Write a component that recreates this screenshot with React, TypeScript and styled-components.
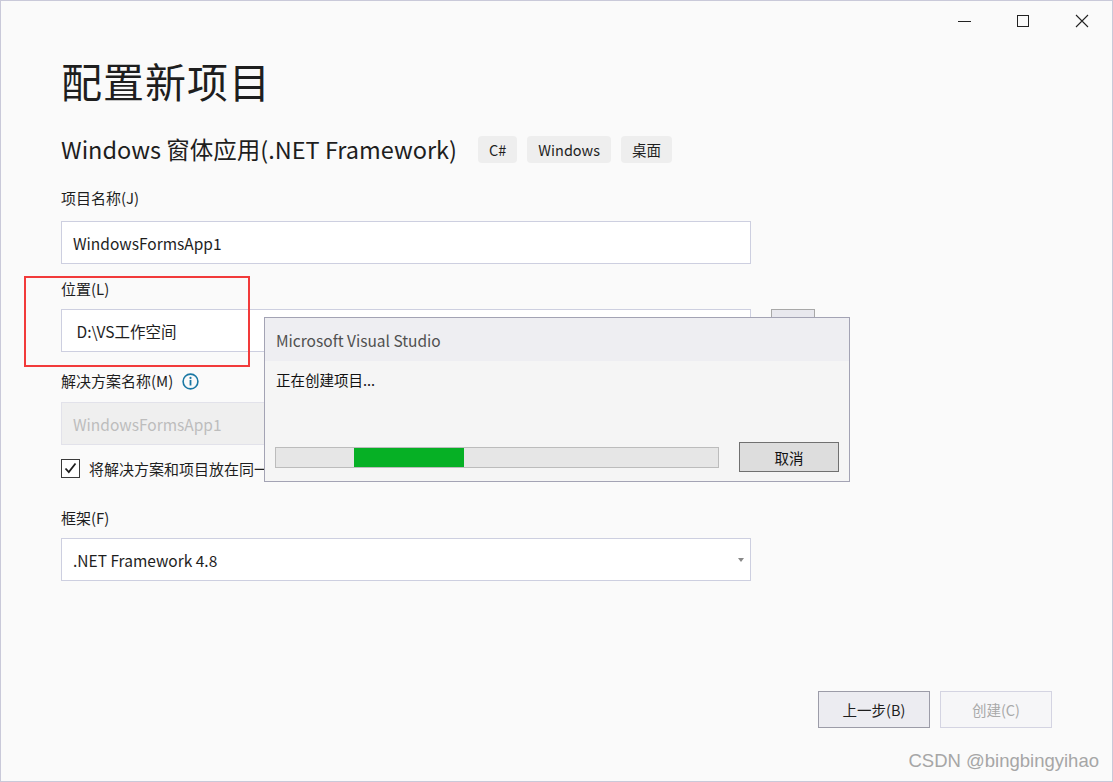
import styled, {createGlobalStyle} from 'styled-components';

const GlobalStyle = createGlobalStyle`
  html, body {
    margin: 0;
    padding: 0;
    background: #fafafa;
  }
  * {
    box-sizing: border-box;
  }
`;

const FONT = `"Noto Sans CJK SC", "Noto Sans", sans-serif`;

const Window = styled.div`
  position: relative;
  width: 1113px;
  height: 782px;
  border: 1px solid #c9c9d9;
  background: #fafafa;
  font-family: ${FONT};
  color: #1e1e1e;
  display: flex;
  flex-direction: column;
  overflow: hidden;
`;

const TitleBar = styled.div`
  height: 42px;
  display: flex;
  justify-content: flex-end;
  align-items: flex-start;
  padding-right: 1px;
`;

const CaptionButton = styled.div`
  width: 59px;
  height: 40px;
  display: flex;
  align-items: center;
  justify-content: center;
  color: #222;
`;

const Main = styled.div`
  padding: 0 60px;
  display: flex;
  flex-direction: column;
`;

const Heading = styled.h1`
  margin: 12px 0 0;
  font-size: 41px;
  line-height: 50px;
  font-weight: 400;
  letter-spacing: 1px;
`;

const SubRow = styled.div`
  margin-top: 29px;
  height: 30px;
  display: flex;
  align-items: center;
`;

const SubTitle = styled.div`
  font-size: 23.5px;
  line-height: 30px;
  margin-right: 21px;
`;

const Tag = styled.span`
  height: 27px;
  padding: 0 11px;
  margin-right: 10px;
  border-radius: 4px;
  background: #eeeeee;
  font-size: 14.5px;
  display: flex;
  align-items: center;
`;

const Label = styled.div<{ $top: number }>`
  margin-top: ${p => p.$top}px;
  height: 20px;
  line-height: 20px;
  font-size: 15px;
  display: flex;
  align-items: center;
  gap: 9px;
`;

const InputRow = styled.div<{ $top: number }>`
  margin-top: ${p => p.$top}px;
  display: flex;
  gap: 20px;
`;

const TextBox = styled.div<{ $disabled?: boolean }>`
  width: 690px;
  height: 43px;
  border: 1px solid ${p => p.$disabled ? '#e2e2ea' : '#cdcfe0'};
  background: ${p => p.$disabled ? '#efefef' : '#ffffff'};
  color: ${p => p.$disabled ? '#bdbdbd' : '#1e1e1e'};
  font-size: 15.5px;
  padding-left: 11px;
  display: flex;
  align-items: center;
  position: relative;
`;

const BrowseButton = styled.div`
  width: 44px;
  height: 43px;
  border: 1px solid #a8a8a8;
  background: #e8e8ee;
`;

const Caret = styled.span`
  position: absolute;
  right: 6px;
  top: 19px;
  width: 0;
  height: 0;
  border-left: 3px solid transparent;
  border-right: 3px solid transparent;
  border-top: 4px solid #888;
`;

const CheckRow = styled.div`
  margin-top: 13px;
  height: 20px;
  display: flex;
  align-items: center;
  gap: 9px;
  font-size: 15px;
`;

const CheckBox = styled.div`
  width: 19px;
  height: 19px;
  border: 1px solid #3a3a3a;
  background: #fff;
  display: flex;
  align-items: center;
  justify-content: center;
`;

const Footer = styled.div`
  margin-top: auto;
  padding: 0 60px 53px 0;
  display: flex;
  justify-content: flex-end;
  gap: 10px;
`;

const FooterButton = styled.div<{ $disabled?: boolean }>`
  width: 112px;
  height: 37px;
  border: 1px solid ${p => p.$disabled ? '#d4d4e2' : '#9c9ca8'};
  background: ${p => p.$disabled ? '#f6f6f8' : '#ececf1'};
  color: ${p => p.$disabled ? '#a9a9a9' : '#1e1e1e'};
  font-size: 14.5px;
  display: flex;
  align-items: center;
  justify-content: center;
`;

const Highlight = styled.div`
  position: absolute;
  left: 23px;
  top: 275px;
  width: 226px;
  height: 91px;
  border: 2px solid #f23a3a;
`;

const Dialog = styled.div`
  position: absolute;
  left: 263px;
  top: 316px;
  width: 586px;
  height: 165px;
  border: 1px solid #a3a3b4;
  background: #f5f5f5;
  display: flex;
  flex-direction: column;
`;

const DialogTitle = styled.div`
  height: 43px;
  background: #eeeef2;
  padding-left: 11px;
  display: flex;
  align-items: center;
  font-size: 15.5px;
  color: #505050;
`;

const DialogText = styled.div`
  padding: 8px 0 0 11px;
  font-size: 14.5px;
  line-height: 22px;
  color: #111;
`;

const DialogFooter = styled.div`
  margin-top: auto;
  padding: 0 10px 9px 10px;
  display: flex;
  align-items: center;
  gap: 20px;
`;

const Progress = styled.div`
  width: 444px;
  height: 21px;
  border: 1px solid #bcbcbc;
  background: #e6e6e6;
  position: relative;
`;

const ProgressFill = styled.div`
  position: absolute;
  top: 0;
  bottom: 0;
  background: #06b025;
`;

const CancelButton = styled.div`
  width: 100px;
  height: 30px;
  border: 1px solid #707070;
  background: #dddddd;
  font-size: 14.5px;
  display: flex;
  align-items: center;
  justify-content: center;
  color: #111;
`;

const Watermark = styled.div`
  position: absolute;
  right: 13px;
  bottom: 9px;
  font-family: "Liberation Sans", Arial, sans-serif;
  font-size: 18.5px;
  color: #a6a6a6;
`;

const InfoIcon = () => (
    <svg width="17" height="17" viewBox="0 0 17 17">
        <circle cx="8.5" cy="8.5" r="7.4" fill="none" stroke="#1a78a4" strokeWidth="1.6"/>
        <circle cx="8.5" cy="4.9" r="1.1" fill="#1a78a4"/>
        <rect x="7.6" y="6.9" width="1.8" height="5.6" fill="#1a78a4"/>
    </svg>
);

const App = () => {
    return (
        <>
            <GlobalStyle/>
            <Window>
                <TitleBar>
                    <CaptionButton>
                        <svg width="14" height="14" viewBox="0 0 14 14">
                            <line x1="1" y1="7.5" x2="14" y2="7.5" stroke="#222" strokeWidth="1"/>
                        </svg>
                    </CaptionButton>
                    <CaptionButton>
                        <svg width="14" height="14" viewBox="0 0 14 14">
                            <rect x="1.5" y="1.5" width="11" height="11" fill="none" stroke="#222" strokeWidth="1"/>
                        </svg>
                    </CaptionButton>
                    <CaptionButton>
                        <svg width="14" height="14" viewBox="0 0 14 14">
                            <path d="M1 1 L13 13 M13 1 L1 13" stroke="#222" strokeWidth="1.1"/>
                        </svg>
                    </CaptionButton>
                </TitleBar>
                <Main>
                    <Heading>配置新项目</Heading>
                    <SubRow>
                        <SubTitle>Windows 窗体应用(.NET Framework)</SubTitle>
                        <Tag>C#</Tag>
                        <Tag>Windows</Tag>
                        <Tag>桌面</Tag>
                    </SubRow>

                    <Label $top={24}>项目名称(J)</Label>
                    <InputRow $top={13}>
                        <TextBox>WindowsFormsApp1</TextBox>
                    </InputRow>

                    <Label $top={15}>位置(L)</Label>
                    <InputRow $top={10}>
                        <TextBox>&nbsp;D:\VS工作空间</TextBox>
                        <BrowseButton/>
                    </InputRow>

                    <Label $top={19}>解决方案名称(M) <InfoIcon/></Label>
                    <InputRow $top={11}>
                        <TextBox $disabled>WindowsFormsApp1</TextBox>
                    </InputRow>

                    <CheckRow>
                        <CheckBox>
                            <svg width="13" height="12" viewBox="0 0 13 12">
                                <path d="M1.5 6.5 L4.8 10 L11.5 1.5" fill="none" stroke="#1e1e1e" strokeWidth="1.8"/>
                            </svg>
                        </CheckBox>
                        将解决方案和项目放在同一目录中
                    </CheckRow>

                    <Label $top={30}>框架(F)</Label>
                    <InputRow $top={10}>
                        <TextBox>.NET Framework 4.8<Caret/></TextBox>
                    </InputRow>
                </Main>
                <Footer>
                    <FooterButton>上一步(B)</FooterButton>
                    <FooterButton $disabled>创建(C)</FooterButton>
                </Footer>

                <Highlight/>

                <Dialog>
                    <DialogTitle>Microsoft Visual Studio</DialogTitle>
                    <DialogText>正在创建项目...</DialogText>
                    <DialogFooter>
                        <Progress>
                            <ProgressFill style={{left: '78px', width: '110px'}}/>
                        </Progress>
                        <CancelButton>取消</CancelButton>
                    </DialogFooter>
                </Dialog>

                <Watermark>CSDN @bingbingyihao</Watermark>
            </Window>
        </>
    );
}

export default App;
